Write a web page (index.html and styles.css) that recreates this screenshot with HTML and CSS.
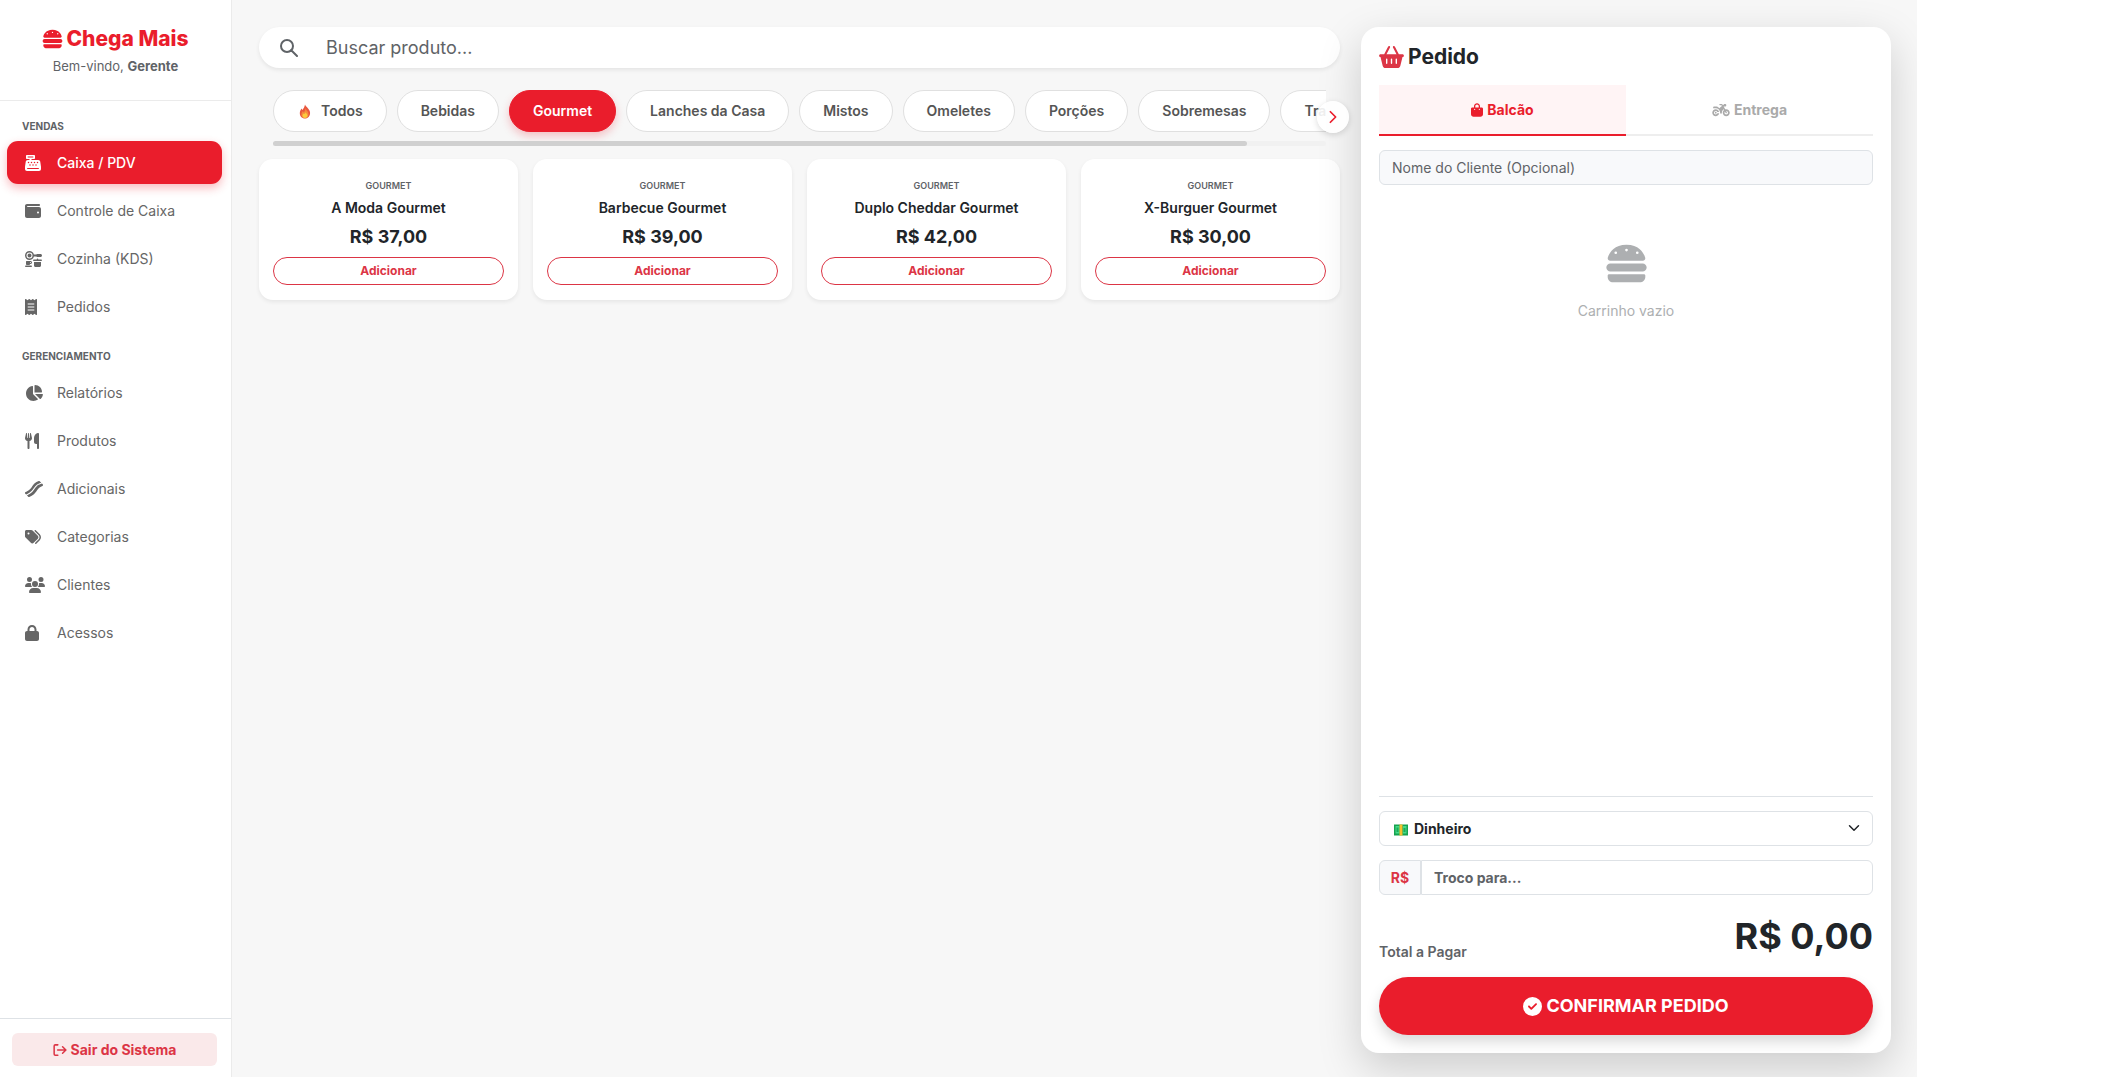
FILE: index.html
```html
<!DOCTYPE html>
<html lang="pt-BR">
<head>
    <meta charset="UTF-8">
    <meta name="viewport" content="width=device-width, initial-scale=1.0">
    <title>Chega Mais - PDV</title>
    <link rel="stylesheet" href="styles.css">
</head>
<body>
    <!-- Ícones -->
    <svg class="sprite" aria-hidden="true">
        <symbol id="burger" viewBox="0 0 512 512"><path d="M61.1 224C45 224 32 211 32 194.900c0-1.900.2-3.700.6-5.600C37.900 168.300 78.800 32 256 32s218.100 136.300 223.400 157.300c.5 1.900.6 3.700.6 5.600 0 16.100-13 29.100-29.100 29.100H61.100zM144 128a16 16 0 1 0-32 0 16 16 0 1 0 32 0zm240 16a16 16 0 1 0 0-32 16 16 0 1 0 0 32zM272 96a16 16 0 1 0-32 0 16 16 0 1 0 32 0zM16 304c0-26.500 21.500-48 48-48h384c26.500 0 48 21.500 48 48s-21.500 48-48 48H64c-26.500 0-48-21.500-48-48zm16 96c0-8.800 7.200-16 16-16h416c8.800 0 16 7.200 16 16v16c0 35.300-28.700 64-64 64H96c-35.300 0-64-28.700-64-64v-16z"/></symbol>
        <symbol id="register" viewBox="0 0 512 512" preserveAspectRatio="xMinYMid meet"><path fill-rule="evenodd" d="M64 0C46.300 0 32 14.300 32 32v64c0 17.700 14.300 32 32 32h80v32H87c-31.600 0-58.500 23.100-63.300 54.400L1.100 364.100C.4 368.800 0 373.600 0 378.400V448c0 35.300 28.700 64 64 64h384c35.300 0 64-28.700 64-64v-69.600c0-4.800-.4-9.600-1.100-14.400l-22.700-149.600c-4.700-31.200-31.600-54.400-63.200-54.400H208v-32h80c17.700 0 32-14.300 32-32V32c0-17.700-14.300-32-32-32H64zm32 48h160c8.800 0 16 7.200 16 16s-7.200 16-16 16H96c-8.800 0-16-7.200-16-16s7.200-16 16-16zM64 432c0-8.800 7.200-16 16-16h352c8.800 0 16 7.200 16 16s-7.200 16-16 16H80c-8.800 0-16-7.200-16-16zm48-216a24 24 0 1 1 0 48 24 24 0 1 1 0-48zm72 24a24 24 0 1 1 48 0 24 24 0 1 1-48 0zm-24 56a24 24 0 1 1 0 48 24 24 0 1 1 0-48zm120-56a24 24 0 1 1 48 0 24 24 0 1 1-48 0zm-24 56a24 24 0 1 1 0 48 24 24 0 1 1 0-48zm120-56a24 24 0 1 1 48 0 24 24 0 1 1-48 0zm-24 56a24 24 0 1 1 0 48 24 24 0 1 1 0-48z"/></symbol>
        <symbol id="wallet" viewBox="0 0 512 512" preserveAspectRatio="xMinYMid meet"><path d="M64 32C28.700 32 0 60.700 0 96v320c0 35.300 28.700 64 64 64h384c35.300 0 64-28.700 64-64V192c0-35.300-28.700-64-64-64H80c-8.800 0-16-7.200-16-16s7.200-16 16-16h368c17.700 0 32-14.300 32-32s-14.300-32-32-32H64zm352 240a32 32 0 1 1 0 64 32 32 0 1 1 0-64z"/></symbol>
        <symbol id="kitchen" viewBox="0 0 576 512" preserveAspectRatio="xMinYMid meet"><path fill-rule="evenodd" d="M240 144a96 96 0 1 0-192 0 96 96 0 1 0 192 0zm44.400 32C269.900 240.100 212.500 288 144 288 64.500 288 0 223.500 0 144S64.500 0 144 0c68.500 0 125.900 47.900 140.400 112h71.800c8.800-9.800 21.600-16 35.800-16h104c26.500 0 48 21.500 48 48s-21.500 48-48 48H392c-14.200 0-27-6.200-35.800-16h-71.800zM144 80a64 64 0 1 1 0 128 64 64 0 1 1 0-128zM400 240c13.300 0 24 10.700 24 24v8h96c13.300 0 24 10.700 24 24s-10.700 24-24 24H280c-13.300 0-24-10.700-24-24s10.700-24 24-24h96v-8c0-13.300 10.700-24 24-24zM288 464V352h224v112c0 26.500-21.500 48-48 48H336c-26.500 0-48-21.500-48-48zM48 320h128c26.500 0 48 21.500 48 48s-21.500 48-48 48h-16c0 17.700-14.300 32-32 32H64c-17.700 0-32-14.300-32-32v-80c0-8.800 7.200-16 16-16zm128 64c8.800 0 16-7.200 16-16s-7.200-16-16-16h-16v32h16zM24 464h176c13.300 0 24 10.700 24 24s-10.700 24-24 24H24c-13.300 0-24-10.700-24-24s10.700-24 24-24z"/></symbol>
        <symbol id="receipt" viewBox="0 0 384 512" preserveAspectRatio="xMinYMid meet"><path fill-rule="evenodd" d="M14 2.200C22.500-1.700 32.500-.3 39.600 5.800L80 40.400l40.400-34.600c9-7.700 22.300-7.700 31.200 0L192 40.400l40.400-34.600c9-7.700 22.200-7.700 31.200 0L304 40.400l40.400-34.600c7.100-6.100 17.100-7.500 25.600-3.600s14 12.400 14 21.800v464c0 9.400-5.500 17.900-14 21.800s-18.500 2.500-25.600-3.600L304 471.600l-40.400 34.600c-9 7.700-22.200 7.700-31.200 0L192 471.600l-40.400 34.600c-9 7.700-22.300 7.700-31.200 0L80 471.600l-40.400 34.600c-7.100 6.100-17.100 7.500-25.600 3.600S0 497.400 0 488V24C0 14.600 5.500 6.100 14 2.200zM96 144c-8.800 0-16 7.200-16 16s7.200 16 16 16h192c8.800 0 16-7.200 16-16s-7.200-16-16-16H96zM80 352c0 8.800 7.200 16 16 16h192c8.800 0 16-7.200 16-16s-7.200-16-16-16H96c-8.800 0-16 7.200-16 16zm16-112c-8.800 0-16 7.200-16 16s7.200 16 16 16h192c8.800 0 16-7.200 16-16s-7.200-16-16-16H96z"/></symbol>
        <symbol id="pie" viewBox="0 0 576 512" preserveAspectRatio="xMinYMid meet"><path d="M304 240V16.600c0-9 7-16.600 16-16.600 123.700 0 224 100.300 224 224 0 9-7.600 16-16.600 16H304zM32 272C32 150.700 122.100 50.300 239 34.300c9.200-1.300 17 6.100 17 15.400V288l156.500 156.500c6.700 6.700 6.200 17.700-1.500 23.100C371.800 495.600 323.800 512 272 512 139.500 512 32 404.600 32 272zm526.400 16c9.300 0 16.600 7.800 15.400 17-7.700 55.900-34.600 105.600-73.900 142.300-6 5.600-15.400 5.200-21.200-.7L320 288h238.400z"/></symbol>
        <symbol id="utensils" viewBox="0 0 448 512" preserveAspectRatio="xMinYMid meet"><path d="M416 0C400 0 288 32 288 176v112c0 35.300 28.700 64 64 64h32v128c0 17.700 14.300 32 32 32s32-14.300 32-32V32c0-17.700-14.300-32-32-32zM64 16C64 7.800 57.900 1 49.700.1S34.200 4.600 32.400 12.500L2.100 148.800C.7 155.100 0 161.500 0 167.900c0 45.900 35.100 83.600 80 87.700V480c0 17.700 14.300 32 32 32s32-14.300 32-32V255.600c44.900-4.100 80-41.800 80-87.700 0-6.400-.7-12.800-2.100-19.100L191.600 12.500c-1.800-8-9.300-13.300-17.400-12.400S160 7.800 160 16v134.200c0 5.400-4.400 9.800-9.800 9.800-5.100 0-9.300-3.900-9.800-9L127.900 14.600C127.200 6.300 120.300 0 112 0s-15.200 6.300-15.900 14.600L83.700 151c-.5 5.100-4.700 9-9.800 9-5.400 0-9.800-4.400-9.800-9.800V16z"/></symbol>
        <symbol id="bacon" viewBox="0 0 576 512" preserveAspectRatio="xMinYMid meet"><path d="M439.200 1.200c11.200-3.200 23.200-.1 31.400 8.100L518 56.700l-26.500 7.900c-58 16.600-98.100 39.600-129.600 67.400-31.200 27.500-53.200 59.100-75.100 90.900l-2.300 3.300C241.600 288.700 195 356.600 72.800 417.700L37.900 435.200 9.400 406.600c-7.300-7.300-10.600-17.600-9-27.800s8.100-18.900 17.300-23.500l24-12C148.400 290.100 186 235.300 228.600 173.400l2.300-3.400c21.900-31.800 45.400-65.500 78.800-95 33.900-29.800 77.700-55.400 129.500-73.800zM61.700 459l25.400-12.700C217 381.400 267.300 308.200 310.900 244.500l2.300-3.300c21.900-31.900 42.100-60.600 69.900-85.200 27.600-24.400 63.500-45.200 117.200-60.500l2-.6 41.100-12.400 23.100 23.100c7.500 7.500 10.900 18.300 8.900 28.800s-8.900 19.400-18.700 23.700c-49.900 22.200-83.600 43.100-110 67.500-25.300 23.300-44.300 50-66.200 81.800l-2.300 3.400C334.300 374.600 281 452 136.600 509.300c-11.900 4.700-25.500 1.900-34.500-7.200L61.700 459z"/></symbol>
        <symbol id="tags" viewBox="0 0 512 512" preserveAspectRatio="xMinYMid meet"><path d="M345 39.100 472.800 168.400c52.400 53 52.400 138.200 0 191.200L360.800 472.900c-9.300 9.400-24.500 9.500-33.900.2s-9.500-24.500-.2-33.900L438.600 325.900c33.900-34.300 33.900-89.400 0-123.700L310.900 72.900c-9.300-9.400-9.200-24.600.2-33.900s24.600-9.200 33.900.2zM0 229.500V80c0-26.500 21.500-48 48-48h149.500c17 0 33.300 6.700 45.300 18.700l168 168c25 25 25 65.500 0 90.500L277.300 442.700c-25 25-65.500 25-90.500 0l-168-168C6.700 262.700 0 246.500 0 229.500zM144 144a32 32 0 1 0-64 0 32 32 0 1 0 64 0z"/></symbol>
        <symbol id="users" viewBox="0 0 640 512" preserveAspectRatio="xMinYMid meet"><path d="M144 0a80 80 0 1 1 0 160 80 80 0 1 1 0-160zm368 0a80 80 0 1 1 0 160 80 80 0 1 1 0-160zM0 298.700C0 239.800 47.800 192 106.700 192h42.700c15.900 0 31 3.500 44.600 9.700-1.300 7.200-1.900 14.700-1.900 22.300 0 38.200 16.800 72.500 43.300 96H21.300C9.600 320 0 310.400 0 298.700zM405.300 320h-.7c26.600-23.500 43.300-57.800 43.300-96 0-7.600-.7-15-1.900-22.300 13.600-6.300 28.700-9.700 44.600-9.700h42.700C592.200 192 640 239.800 640 298.700c0 11.800-9.600 21.300-21.300 21.300H405.300zM224 224a96 96 0 1 1 192 0 96 96 0 1 1-192 0zM128 485.300C128 411.700 187.700 352 261.300 352h117.300C452.300 352 512 411.700 512 485.300c0 14.700-11.900 26.700-26.700 26.700H154.600c-14.700 0-26.700-11.900-26.700-26.700z"/></symbol>
        <symbol id="lock" viewBox="0 0 448 512" preserveAspectRatio="xMinYMid meet"><path d="M144 144v48h160v-48c0-44.200-35.800-80-80-80s-80 35.800-80 80zm-64 48v-48C80 64.500 144.500 0 224 0s144 64.500 144 144v48h16c35.300 0 64 28.700 64 64v192c0 35.300-28.700 64-64 64H64c-35.300 0-64-28.700-64-64V256c0-35.300 28.700-64 64-64h16z"/></symbol>
        <symbol id="exit" viewBox="0 0 512 512"><path d="M176 68H84a42 42 0 0 0-42 42v292a42 42 0 0 0 42 42h92M170 256h300M350 136l122 120-122 120" fill="none" stroke="currentColor" stroke-width="56" stroke-linecap="round" stroke-linejoin="round"/></symbol>
        <symbol id="search" viewBox="0 0 18 18"><path d="M13 7a6 6 0 1 1-12 0 6 6 0 0 1 12 0zM11 11l6 6" fill="none" stroke="currentColor" stroke-width="2" stroke-linecap="round"/></symbol>
        <symbol id="fire" viewBox="0 0 24 30"><path fill="#e9573e" d="M12 1c1 4 8 7 10 15 1 8-4 13-10 13S0 24 2 15c1-3 2-4 3-6l2 3c2-3 4-6 5-11z"/><path fill="#f58a3c" d="M13 8c0 4 6 6 6 12 0 5-3 8-7 8s-8-3-7-8c0-3 2-5 3-6l1 3c2-2 4-5 4-9z"/><path fill="#fcc93c" d="M13 16c1 3 4 4 4 7s-2 5-5 5-5-2-5-5 2-3 3-4l1 1c1-1 2-2 2-4z"/></symbol>
        <symbol id="cash" viewBox="0 0 28 24"><path fill="#16a34f" d="M0 1h28v22H0z"/><path fill="#45d98a" d="M3 4h8v15H3zM18 4h7v15h-7z"/><path fill="#1cab57" d="M5 7h4v9H5zM19 8h4v8h-4z"/><path fill="#f6c12d" d="M11 1h6v22h-6z"/></symbol>
        <symbol id="basket" viewBox="0 0 576 512"><path fill-rule="evenodd" d="M253.300 35.100c6.100-11.800 1.500-26.300-10.200-32.400s-26.300-1.500-32.400 10.200L117.600 192H32c-17.700 0-32 14.300-32 32s14.300 32 32 32l51.900 207.500C91 492 116.600 512 146 512h284c29.400 0 55-20 62.100-48.500L544 256c17.700 0 32-14.300 32-32s-14.300-32-32-32h-85.600L365.300 12.900c-6.100-11.700-20.600-16.300-32.400-10.200s-16.300 20.600-10.200 32.400L404.300 192H171.700l81.600-156.900zM192 304v96c0 8.800-7.200 16-16 16s-16-7.200-16-16v-96c0-8.800 7.200-16 16-16s16 7.200 16 16zm96-16c8.800 0 16 7.200 16 16v96c0 8.800-7.200 16-16 16s-16-7.200-16-16v-96c0-8.800 7.200-16 16-16zm128 16v96c0 8.800-7.200 16-16 16s-16-7.200-16-16v-96c0-8.800 7.200-16 16-16s16 7.200 16 16z"/></symbol>
        <symbol id="bag" viewBox="0 0 448 512"><path fill-rule="evenodd" d="M160 112c0-35.300 28.700-64 64-64s64 28.700 64 64v48H160v-48zm-48 48H48c-26.500 0-48 21.500-48 48v208c0 53 43 96 96 96h256c53 0 96-43 96-96V208c0-26.500-21.500-48-48-48h-64v-48C336 50.100 285.900 0 224 0S112 50.100 112 112v48zm24 48a24 24 0 1 1 0 48 24 24 0 1 1 0-48zm152 24a24 24 0 1 1 48 0 24 24 0 1 1-48 0z"/></symbol>
        <symbol id="moto" viewBox="0 0 640 512"><path d="M280 32c-13.300 0-24 10.700-24 24s10.700 24 24 24h57.700l16.400 30.300L256 192l-45.300-45.300c-12-12-28.300-18.700-45.300-18.700H64c-17.700 0-32 14.300-32 32v32h96c88.400 0 160 71.600 160 160 0 11-1.100 21.700-3.200 32h70.400c-2.100-10.300-3.200-21-3.200-32 0-52.200 25-98.600 63.700-127.800l15.400 28.600C402.400 276.300 384 312 384 352c0 70.700 57.300 128 128 128s128-57.300 128-128-57.300-128-128-128c-13.500 0-26.500 2.100-38.700 6L418.200 128H480c17.700 0 32-14.300 32-32V64c0-17.700-14.300-32-32-32h-20.400c-7.500 0-14.700 2.600-20.500 7.400L391.700 78.900l-14-26C370.700 40 357.200 32 342.600 32H280zm182.700 279.200 28.200 52.400c6.300 11.700 20.800 16 32.500 9.800s16-20.800 9.800-32.500l-28.200-52.400c2.300-.3 4.700-.4 7.100-.4 35.300 0 64 28.700 64 64s-28.700 64-64 64-64-28.700-64-64c0-15.500 5.500-29.700 14.700-40.800zM187.300 376c-9.500 23.500-32.500 40-59.300 40-35.300 0-64-28.700-64-64s28.700-64 64-64c26.900 0 49.900 16.500 59.300 40h66.400C242.500 268.800 190.500 224 128 224 57.300 224 0 281.300 0 352s57.300 128 128 128c62.500 0 114.500-44.800 125.800-104h-66.400zM128 384a32 32 0 1 0 0-64 32 32 0 1 0 0 64z"/></symbol>
        <symbol id="check" viewBox="0 0 512 512"><path d="M256 512a256 256 0 1 0 0-512 256 256 0 1 0 0 512zM369 209 241 337c-9.400 9.400-24.600 9.400-33.900 0l-64-64c-9.400-9.400-9.400-24.600 0-33.900s24.600-9.400 33.900 0l47 47L335 175c9.400-9.400 24.600-9.400 33.900 0s9.400 24.600 0 33.900z"/></symbol>
        <symbol id="chevron" viewBox="0 0 16 16"><path d="M5 2l6 6-6 6" fill="none" stroke="currentColor" stroke-width="2" stroke-linecap="round" stroke-linejoin="round"/></symbol>
    </svg>

    <div class="app">
        <aside class="sidebar">
            <div class="brand">
                <h1><svg class="icon"><use href="#burger"/></svg>Chega Mais</h1>
                <p>Bem-vindo, <strong>Gerente</strong></p>
            </div>
            <nav class="menu">
                <h2>VENDAS</h2>
                <a href="#" class="active"><svg class="icon"><use href="#register"/></svg>Caixa / PDV</a>
                <a href="#"><svg class="icon"><use href="#wallet"/></svg>Controle de Caixa</a>
                <a href="#"><svg class="icon"><use href="#kitchen"/></svg>Cozinha (KDS)</a>
                <a href="#"><svg class="icon"><use href="#receipt"/></svg>Pedidos</a>
                <h2>GERENCIAMENTO</h2>
                <a href="#"><svg class="icon"><use href="#pie"/></svg>Relatórios</a>
                <a href="#"><svg class="icon"><use href="#utensils"/></svg>Produtos</a>
                <a href="#"><svg class="icon"><use href="#bacon"/></svg>Adicionais</a>
                <a href="#"><svg class="icon"><use href="#tags"/></svg>Categorias</a>
                <a href="#"><svg class="icon"><use href="#users"/></svg>Clientes</a>
                <a href="#"><svg class="icon"><use href="#lock"/></svg>Acessos</a>
            </nav>
            <div class="logout">
                <a href="#"><svg class="icon"><use href="#exit"/></svg>Sair do Sistema</a>
            </div>
        </aside>

        <main class="products">
            <label class="search">
                <svg class="icon"><use href="#search"/></svg>
                <input type="text" placeholder="Buscar produto..." aria-label="Buscar produto">
            </label>

            <div class="categories">
                <div class="chips">
                    <button><svg class="icon"><use href="#fire"/></svg>Todos</button>
                    <button>Bebidas</button>
                    <button class="active">Gourmet</button>
                    <button>Lanches da Casa</button>
                    <button>Mistos</button>
                    <button>Omeletes</button>
                    <button>Porções</button>
                    <button>Sobremesas</button>
                    <button>Tradicionais</button>
                </div>
                <div class="track"><div class="thumb"></div></div>
                <button class="next" aria-label="Próximas categorias"><svg class="icon"><use href="#chevron"/></svg></button>
            </div>

            <div class="grid">
                <article class="card">
                    <small>GOURMET</small>
                    <h3>A Moda Gourmet</h3>
                    <p>R$ 37,00</p>
                    <button>Adicionar</button>
                </article>
                <article class="card">
                    <small>GOURMET</small>
                    <h3>Barbecue Gourmet</h3>
                    <p>R$ 39,00</p>
                    <button>Adicionar</button>
                </article>
                <article class="card">
                    <small>GOURMET</small>
                    <h3>Duplo Cheddar Gourmet</h3>
                    <p>R$ 42,00</p>
                    <button>Adicionar</button>
                </article>
                <article class="card">
                    <small>GOURMET</small>
                    <h3>X-Burguer Gourmet</h3>
                    <p>R$ 30,00</p>
                    <button>Adicionar</button>
                </article>
            </div>
        </main>

        <section class="order">
            <h2><svg class="icon"><use href="#basket"/></svg>Pedido</h2>
            <div class="tabs">
                <button class="active"><svg class="icon"><use href="#bag"/></svg>Balcão</button>
                <button><svg class="icon icon-wide"><use href="#moto"/></svg>Entrega</button>
            </div>
            <input class="field client" type="text" placeholder="Nome do Cliente (Opcional)" aria-label="Nome do Cliente">

            <div class="empty">
                <svg class="icon"><use href="#burger"/></svg>
                <p>Carrinho vazio</p>
            </div>

            <div class="payment">
                <div class="method">
                    <svg class="icon cash"><use href="#cash"/></svg>
                    <select class="field" aria-label="Forma de pagamento">
                        <option>Dinheiro</option>
                    </select>
                    <svg class="icon arrow"><use href="#chevron"/></svg>
                </div>
                <div class="change">
                    <label for="troco">R$</label>
                    <input class="field" id="troco" type="text" placeholder="Troco para...">
                </div>
                <div class="total">
                    <span>Total a Pagar</span>
                    <strong>R$ 0,00</strong>
                </div>
                <button class="confirm"><svg class="icon"><use href="#check"/></svg>CONFIRMAR PEDIDO</button>
            </div>
        </section>
    </div>
</body>
</html>
```
FILE: styles.css
```css
* {
    box-sizing: border-box;
}

body {
    margin: 0;
    font-family: Inter, sans-serif;
    font-size: 14px;
    line-height: 22px;
    color: #212529;
    background-color: #fff;
}

h1, h2, h3, p {
    margin: 0;
}

a {
    text-decoration: none;
}

button, input, select {
    font: inherit;
    color: inherit;
}

button {
    cursor: pointer;
}

.sprite {
    display: none;
}

.icon {
    width: 16px;
    height: 16px;
    fill: currentColor;
    flex-shrink: 0;
}

.app {
    display: flex;
    height: 100vh;
    margin-right: 205px;
    background-color: #f7f7f7;
    overflow: hidden;
}

/* Menu lateral */
.sidebar {
    display: flex;
    flex-direction: column;
    width: 232px;
    flex-shrink: 0;
    background-color: #fff;
    border-right: 1px solid #ebebeb;
}

.brand {
    padding: 23px 0;
    text-align: center;
    border-bottom: 1px solid #ebebeb;
}

.brand h1 {
    display: flex;
    justify-content: center;
    align-items: center;
    gap: 3px;
    font-size: 21px;
    line-height: 32px;
    font-weight: 800;
    color: #ea1d2c;
}

.brand .icon {
    width: 21px;
    height: 22px;
}

.brand p {
    font-size: 13px;
    color: #5f6367;
}

.menu {
    flex: 1;
    padding: 15px 9px 0 7px;
}

.menu h2 {
    padding: 0 15px;
    margin-bottom: 5px;
    font-size: 10px;
    line-height: 20px;
    font-weight: 700;
    color: #5f6367;
}

.menu a {
    display: flex;
    align-items: center;
    height: 43px;
    margin-bottom: 5px;
    padding-left: 18px;
    border-radius: 11px;
    color: #666;
}

.menu a + h2 {
    margin-top: 18px;
}

.menu .icon {
    width: 20px;
    margin-right: 12px;
}

.menu a.active {
    color: #fff;
    font-weight: 500;
    background-color: #ea1d2c;
    box-shadow: 0 4px 10px rgba(234, 29, 44, 0.3);
}

.logout {
    padding: 14px 14px 11px 12px;
    border-top: 1px solid #dee2e6;
}

.logout a {
    display: flex;
    justify-content: center;
    align-items: center;
    gap: 4px;
    height: 33px;
    border-radius: 6px;
    font-weight: 700;
    color: #dc3545;
    background-color: #fae9ea;
}

.logout .icon {
    width: 14px;
    height: 14px;
}

/* Produtos */
.products {
    flex: 1;
    min-width: 0;
    padding: 27px 21px 0 27px;
}

.search {
    display: flex;
    align-items: center;
    gap: 28px;
    height: 41px;
    padding: 0 21px;
    border-radius: 21px;
    color: #5f6367;
    background-color: #fff;
    box-shadow: 0 2px 4px rgba(0, 0, 0, 0.08);
}

.search .icon {
    width: 18px;
    height: 18px;
}

.search input {
    flex: 1;
    padding: 0;
    border: none;
    outline: none;
    font-size: 18px;
    background: none;
}

input::placeholder {
    color: #5f6367;
    opacity: 1;
}

.categories {
    position: relative;
    margin-top: 22px;
    padding: 0 14px;
}

.chips {
    display: flex;
    gap: 10px;
    /* espaço para a sombra do item ativo */
    padding-bottom: 9px;
    overflow: hidden;
}

.chips button {
    display: flex;
    align-items: center;
    gap: 8px;
    flex-shrink: 0;
    height: 42px;
    padding: 0 23px;
    border: 1px solid #e0e0e0;
    border-radius: 21px;
    font-weight: 600;
    color: #555;
    background-color: #fff;
}

.chips .icon {
    width: 16px;
    height: 15px;
}

.chips button.active {
    color: #fff;
    border-color: #ea1d2c;
    background-color: #ea1d2c;
    box-shadow: 0 4px 8px rgba(234, 29, 44, 0.25);
}

.track {
    height: 5px;
    border-radius: 3px;
    background-color: #f1f1f1;
}

.thumb {
    width: 92.5%;
    height: 5px;
    border-radius: 3px;
    background-color: #d0d0d0;
}

.next {
    position: absolute;
    top: 11px;
    right: -9px;
    display: flex;
    justify-content: center;
    align-items: center;
    width: 32px;
    height: 32px;
    padding: 0;
    border: none;
    border-radius: 50%;
    color: #ea1d2c;
    background-color: rgba(255, 255, 255, 0.9);
    box-shadow: 0 2px 6px rgba(0, 0, 0, 0.15);
}

.next .icon {
    width: 14px;
    height: 14px;
}

.grid {
    display: grid;
    grid-template-columns: repeat(4, 1fr);
    gap: 15px;
    margin-top: 13px;
}

.card {
    display: flex;
    flex-direction: column;
    height: 141px;
    padding: 18px 14px 15px;
    border-radius: 14px;
    text-align: center;
    background-color: #fff;
    box-shadow: 0 2px 4px rgba(0, 0, 0, 0.07);
}

.card small {
    font-size: 9px;
    line-height: 17px;
    font-weight: 600;
    color: #5f6367;
}

.card h3 {
    margin-top: 3px;
    font-size: 14px;
    font-weight: 600;
}

.card p {
    margin-top: 7px;
    font-size: 18px;
    font-weight: 700;
}

.card button {
    height: 28px;
    margin-top: auto;
    border: 1px solid #dc3545;
    border-radius: 14px;
    font-size: 12px;
    line-height: 18px;
    font-weight: 700;
    color: #dc3545;
    background-color: #fff;
}

/* Pedido */
.order {
    display: flex;
    flex-direction: column;
    width: 530px;
    flex-shrink: 0;
    margin: 27px 26px 24px 0;
    padding: 17px 18px 18px;
    border-radius: 18px;
    background-color: #fff;
    box-shadow: 0 15px 44px rgba(0, 0, 0, 0.175);
}

.order h2 {
    display: flex;
    align-items: center;
    gap: 4px;
    margin-bottom: 15px;
    font-size: 21px;
    line-height: 26px;
    font-weight: 700;
}

.order h2 .icon {
    width: 25px;
    height: 22px;
    color: #dc3545;
}

.tabs {
    display: flex;
    margin-bottom: 14px;
}

.tabs button {
    display: flex;
    flex: 1;
    justify-content: center;
    align-items: center;
    gap: 4px;
    height: 51px;
    border: none;
    border-bottom: 2px solid #eee;
    font-weight: 700;
    color: #aaa;
    background: none;
}

.tabs .icon {
    width: 12px;
    height: 14px;
}

.tabs .icon-wide {
    width: 18px;
}

.tabs button.active {
    color: #ea1d2c;
    border-color: #ea1d2c;
    background-color: #fff4f5;
}

.field {
    width: 100%;
    height: 35px;
    padding: 0 12px;
    border: 1px solid #dee2e6;
    border-radius: 6px;
    font-weight: 700;
    background-color: #fff;
}

.client {
    font-weight: 400;
    background-color: #f8f9fb;
}

.empty {
    flex: 1;
    padding-top: 57px;
    text-align: center;
    color: #adafb1;
}

.empty .icon {
    width: 43px;
    height: 43px;
}

.empty p {
    margin-top: 9px;
}

.payment {
    display: flex;
    flex-direction: column;
    gap: 14px;
    padding-top: 14px;
    border-top: 1px solid #dee2e6;
}

.method {
    position: relative;
}

.method select {
    appearance: none;
    padding-left: 34px;
}

.cash {
    position: absolute;
    top: 13px;
    left: 15px;
    width: 14px;
    height: 12px;
}

.arrow {
    position: absolute;
    top: 11px;
    right: 13px;
    width: 12px;
    height: 12px;
    transform: rotate(90deg);
}

.change {
    display: flex;
}

.change label {
    width: 42px;
    border: 1px solid #dee2e6;
    border-radius: 6px 0 0 6px;
    line-height: 33px;
    text-align: center;
    font-weight: 700;
    color: #dc3545;
    background-color: #f8f9fb;
}

.change .field {
    flex: 1;
    border-radius: 0 6px 6px 0;
}

.total {
    display: flex;
    justify-content: space-between;
    align-items: flex-end;
    height: 54px;
    font-weight: 600;
    color: #5f6367;
}

.total strong {
    font-size: 36px;
    line-height: 54px;
    font-weight: 700;
    color: #212529;
}

.confirm {
    display: flex;
    justify-content: center;
    align-items: center;
    gap: 4px;
    height: 58px;
    border: none;
    border-radius: 29px;
    font-size: 18px;
    font-weight: 700;
    color: #fff;
    background-color: #ea1d2c;
    box-shadow: 0 7px 14px rgba(0, 0, 0, 0.15);
}

.confirm .icon {
    width: 19px;
    height: 19px;
}
```
